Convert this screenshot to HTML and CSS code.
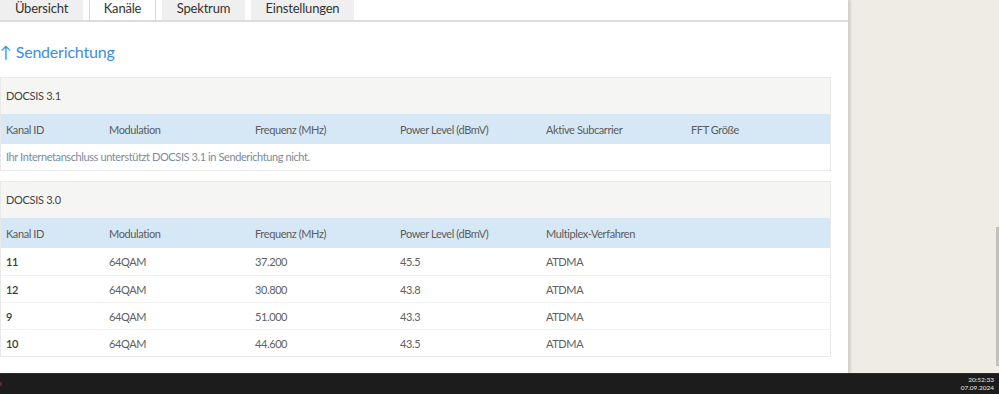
FILE: index.html
```html
<!DOCTYPE html>
<html lang="de">
<head>
    <meta charset="UTF-8">
    <meta name="viewport" content="width=device-width, initial-scale=1">
    <title>Kabel-Informationen</title>
    <link rel="stylesheet" href="styles.css">
</head>
<body>
    <div class="screen">
        <main class="page">
            <nav class="tabs">
                <a class="tab tab-overview">Übersicht</a>
                <a class="tab tab-channels active">Kanäle</a>
                <a class="tab tab-spectrum">Spektrum</a>
                <a class="tab tab-settings">Einstellungen</a>
            </nav>

            <h2 class="direction">↑ Senderichtung</h2>

            <!-- DOCSIS 3.1 -->
            <section class="card">
                <div class="card-title">DOCSIS 3.1</div>
                <div class="row head">
                    <span>Kanal ID</span>
                    <span>Modulation</span>
                    <span>Frequenz (MHz)</span>
                    <span>Power Level (dBmV)</span>
                    <span>Aktive Subcarrier</span>
                    <span>FFT Größe</span>
                </div>
                <div class="row note">Ihr Internetanschluss unterstützt DOCSIS 3.1 in Senderichtung nicht.</div>
            </section>

            <!-- DOCSIS 3.0 -->
            <section class="card">
                <div class="card-title">DOCSIS 3.0</div>
                <div class="row head">
                    <span>Kanal ID</span>
                    <span>Modulation</span>
                    <span>Frequenz (MHz)</span>
                    <span>Power Level (dBmV)</span>
                    <span>Multiplex-Verfahren</span>
                </div>
                <div class="row">
                    <span class="id">11</span><span>64QAM</span><span>37.200</span><span>45.5</span><span>ATDMA</span>
                </div>
                <div class="row">
                    <span class="id">12</span><span>64QAM</span><span>30.800</span><span>43.8</span><span>ATDMA</span>
                </div>
                <div class="row">
                    <span class="id">9</span><span>64QAM</span><span>51.000</span><span>43.3</span><span>ATDMA</span>
                </div>
                <div class="row">
                    <span class="id">10</span><span>64QAM</span><span>44.600</span><span>43.5</span><span>ATDMA</span>
                </div>
            </section>
        </main>

        <aside class="side">
            <div class="scrollbar"></div>
        </aside>
    </div>

    <footer class="taskbar">
        <span class="tray-mark"></span>
        <div class="clock">
            <span>20:52:33</span>
            <span>07.09.2024</span>
        </div>
    </footer>
</body>
</html>
```

FILE: styles.css
```css
* {
    box-sizing: border-box;
}

body {
    font-family: Lato, "Open Sans", sans-serif;
    font-size: 11px;
    margin: 0;
    padding: 0;
    height: 394px;
    overflow: hidden;
    display: flex;
    flex-direction: column;
    background-color: #efece6;
}

.screen {
    display: flex;
    height: 373px;
}

.page {
    width: 849px;
    background-color: #fff;
    border-right: 1px solid #d6d3cd;
    box-shadow: 1px 0 3px rgba(0, 0, 0, 0.18);
    overflow: hidden;
}

/* Reiter oben */
.tabs {
    display: flex;
    gap: 6px;
    height: 22px;
    border-bottom: 2px solid #dcdcdc;
}

.tab {
    display: flex;
    align-items: center;
    justify-content: center;
    padding-bottom: 4px;
    background-color: #efefef;
    color: #333;
    font-size: 13px;
    letter-spacing: -0.2px;
    cursor: pointer;
}

.tab-overview {
    width: 83px;
}

.tab-channels {
    width: 67px;
}

.tab-spectrum {
    width: 83px;
}

.tab-settings {
    width: 103px;
}

.tab.active {
    background-color: #fff;
    border-left: 1px solid #d8d8d8;
    border-right: 1px solid #d8d8d8;
}

.direction {
    margin: 18px 0 13px;
    font-size: 16px;
    font-weight: normal;
    letter-spacing: -0.2px;
    color: #3d8de0;
    line-height: 24px;
}

.card {
    width: 831px;
    border: 1px solid #e9e9e9;
    margin-bottom: 10px;
}

.card-title {
    height: 36px;
    line-height: 36px;
    padding-left: 5px;
    background-color: #f5f5f3;
    color: #444;
    letter-spacing: -0.3px;
}

.row {
    display: grid;
    grid-template-columns: 103px 146px 145px 146px 145px auto;
    height: 27px;
    align-items: center;
    padding-left: 5px;
    color: #606060;
    letter-spacing: -0.4px;
    border-top: 1px solid #f1f1f1;
}

.row.head {
    height: 30px;
    background-color: #d6e7f5;
    color: #5c5c5c;
    border-top: none;
}

.row.head + .row {
    border-top: none;
}

.row.note {
    display: block;
    height: 26px;
    line-height: 26px;
    color: #7b8c9c;
}

.row .id {
    color: #3a3a3a;
    font-weight: 600;
}

.side {
    flex: 1;
    position: relative;
}

.scrollbar {
    position: absolute;
    right: 0;
    top: 227px;
    width: 3px;
    height: 139px;
    background-color: #c2c0bc;
}

.taskbar {
    height: 21px;
    background-color: #1c1c1c;
    border-top: 1px solid #2b2b2b;
    display: flex;
    align-items: center;
    justify-content: space-between;
    padding-right: 5px;
}

.tray-mark {
    width: 2px;
    height: 4px;
    background-color: #6b2020;
}

.clock {
    display: flex;
    flex-direction: column;
    align-items: flex-end;
    color: #e8e8e8;
    font-size: 6.5px;
    line-height: 8px;
}
```
